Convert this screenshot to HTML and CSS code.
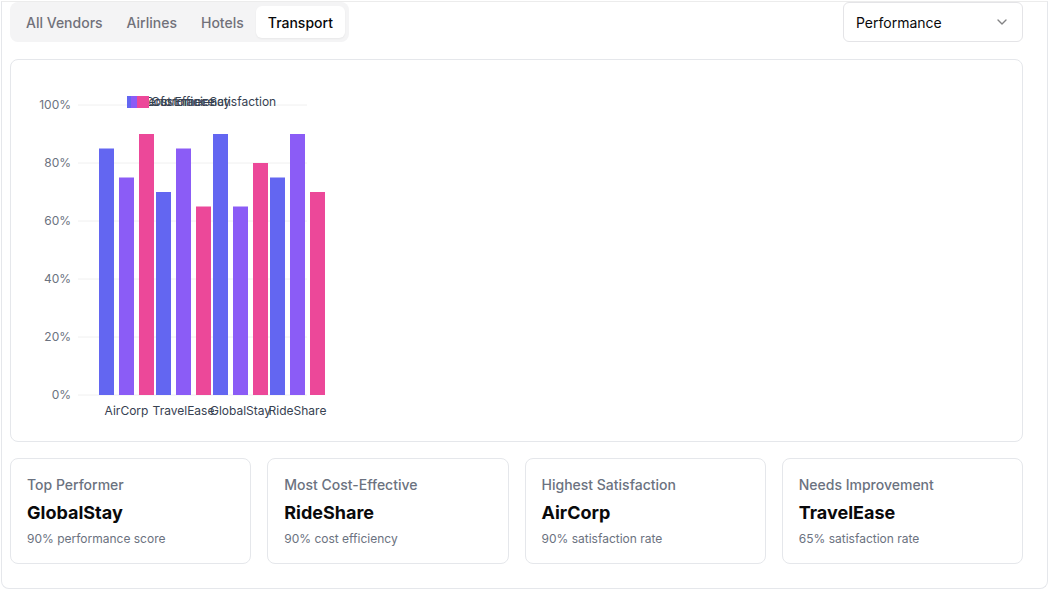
FILE: index.html
```html
<!DOCTYPE html>
<html>
<head>
<meta charset="utf-8">
<link rel="stylesheet" href="styles.css">
</head>
<body>
<div class="panel">
  <div class="header">
    <div class="tabs">
      <div class="tab">All Vendors</div>
      <div class="tab">Airlines</div>
      <div class="tab">Hotels</div>
      <div class="tab active">Transport</div>
    </div>
    <div class="select">
      <span>Performance</span>
      <svg class="chev" width="16" height="16" viewBox="0 0 24 24" fill="none" stroke="currentColor" stroke-width="2" stroke-linecap="round" stroke-linejoin="round"><path d="m6 9 6 6 6-6"/></svg>
    </div>
  </div>

  <div class="chart-card">
    <svg class="chart" width="320" height="349" viewBox="0 0 320 349">
      <g class="grid">
        <line x1="51" x2="280" y1="29" y2="29"/>
        <line x1="51" x2="280" y1="87" y2="87"/>
        <line x1="51" x2="280" y1="145" y2="145"/>
        <line x1="51" x2="280" y1="203" y2="203"/>
        <line x1="51" x2="280" y1="261" y2="261"/>
        <line x1="51" x2="280" y1="319" y2="319"/>
      </g>
      <g class="ylab">
        <text x="44" y="33">100%</text>
        <text x="44" y="91">80%</text>
        <text x="44" y="149">60%</text>
        <text x="44" y="207">40%</text>
        <text x="44" y="265">20%</text>
        <text x="44" y="323">0%</text>
      </g>
      <g class="bars">
        <rect class="b1" x="72" y="72.5" width="15" height="246.5"/>
        <rect class="b2" x="92" y="101.5" width="15" height="217.5"/>
        <rect class="b3" x="112" y="58" width="15" height="261"/>

        <rect class="b1" x="129" y="116" width="15" height="203"/>
        <rect class="b2" x="149" y="72.5" width="15" height="246.5"/>
        <rect class="b3" x="169" y="130.5" width="15" height="188.5"/>

        <rect class="b1" x="186" y="58" width="15" height="261"/>
        <rect class="b2" x="206" y="130.5" width="15" height="188.5"/>
        <rect class="b3" x="226" y="87" width="15" height="232"/>

        <rect class="b1" x="243" y="101.5" width="15" height="217.5"/>
        <rect class="b2" x="263" y="58" width="15" height="261"/>
        <rect class="b3" x="283" y="116" width="15" height="203"/>
      </g>
      <g class="xlab">
        <text x="99.5" y="339">AirCorp</text>
        <text x="156.5" y="339">TravelEase</text>
        <text x="213.5" y="339">GlobalStay</text>
        <text x="270.5" y="339">RideShare</text>
      </g>
      <g class="legend">
        <rect class="b1" x="100" y="20" width="11" height="12"/>
        <text x="114" y="30">Performance</text>
        <rect class="b2" x="104" y="20" width="11" height="12"/>
        <text x="118" y="30">Cost Efficiency</text>
        <rect class="b3" x="110" y="20" width="12" height="12"/>
        <text x="124" y="30">Customer Satisfaction</text>
      </g>
    </svg>
  </div>

  <div class="stats">
    <div class="stat">
      <div class="label">Top Performer</div>
      <div class="name">GlobalStay</div>
      <div class="sub">90% performance score</div>
    </div>
    <div class="stat">
      <div class="label">Most Cost-Effective</div>
      <div class="name">RideShare</div>
      <div class="sub">90% cost efficiency</div>
    </div>
    <div class="stat">
      <div class="label">Highest Satisfaction</div>
      <div class="name">AirCorp</div>
      <div class="sub">90% satisfaction rate</div>
    </div>
    <div class="stat">
      <div class="label">Needs Improvement</div>
      <div class="name">TravelEase</div>
      <div class="sub">65% satisfaction rate</div>
    </div>
  </div>
</div>
</body>
</html>
```

FILE: styles.css
```css
* { box-sizing: border-box; }
html, body { margin: 0; padding: 0; background: #ffffff; }
body {
  font-family: Inter, "Liberation Sans", sans-serif;
  color: #09090b;
}
.panel {
  margin: 1px 0 0 1px;
  width: 1047px;
  border: 1px solid #e5e7eb;
  border-top-color: #ececec;
  border-radius: 0 0 8px 8px;
  padding: 0 24px 24px 8px;
}
.header {
  display: flex;
  justify-content: space-between;
  align-items: flex-start;
}
.tabs {
  display: flex;
  background: #f4f4f5;
  border-radius: 8px;
  padding: 4px;
  height: 40px;
}
.tab {
  height: 32px;
  padding: 0 12px;
  display: flex;
  align-items: center;
  font-size: 14px;
  font-weight: 500;
  color: #71717a;
  border-radius: 6px;
}
.tab.active {
  background: #ffffff;
  color: #09090b;
  box-shadow: 0 1px 2px rgba(0,0,0,0.05);
}
.select {
  width: 180px;
  height: 40px;
  border: 1px solid #e4e4e7;
  border-radius: 6px;
  display: flex;
  align-items: center;
  justify-content: space-between;
  padding: 0 12px;
  font-size: 14px;
  color: #09090b;
}
.chev { color: #09090b; opacity: 0.5; }
.chart-card {
  margin-top: 17px;
  border: 1px solid #e5e7eb;
  border-radius: 8px;
  padding: 16px;
  height: 383px;
}
.chart { display: block; }
.grid line { stroke: #f0f0f0; stroke-width: 1; }
.ylab text {
  font-size: 12px;
  fill: #6b7280;
  text-anchor: end;
}
.xlab text {
  font-size: 12px;
  fill: #374151;
  text-anchor: middle;
}
.legend text {
  font-size: 12px;
  fill: #374151;
}
.b1 { fill: #6366f1; }
.b2 { fill: #8b5cf6; }
.b3 { fill: #ec4899; }
.stats {
  margin-top: 16px;
  display: grid;
  grid-template-columns: repeat(4, 1fr);
  gap: 16px;
}
.stat {
  border: 1px solid #e5e7eb;
  border-radius: 8px;
  padding: 16px;
}
.label {
  font-size: 14px;
  line-height: 20px;
  font-weight: 500;
  color: #6b7280;
}
.name {
  margin-top: 4px;
  font-size: 18px;
  line-height: 28px;
  font-weight: 700;
  color: #09090b;
}
.sub {
  margin-top: 4px;
  font-size: 12px;
  line-height: 16px;
  color: #6b7280;
}
```
